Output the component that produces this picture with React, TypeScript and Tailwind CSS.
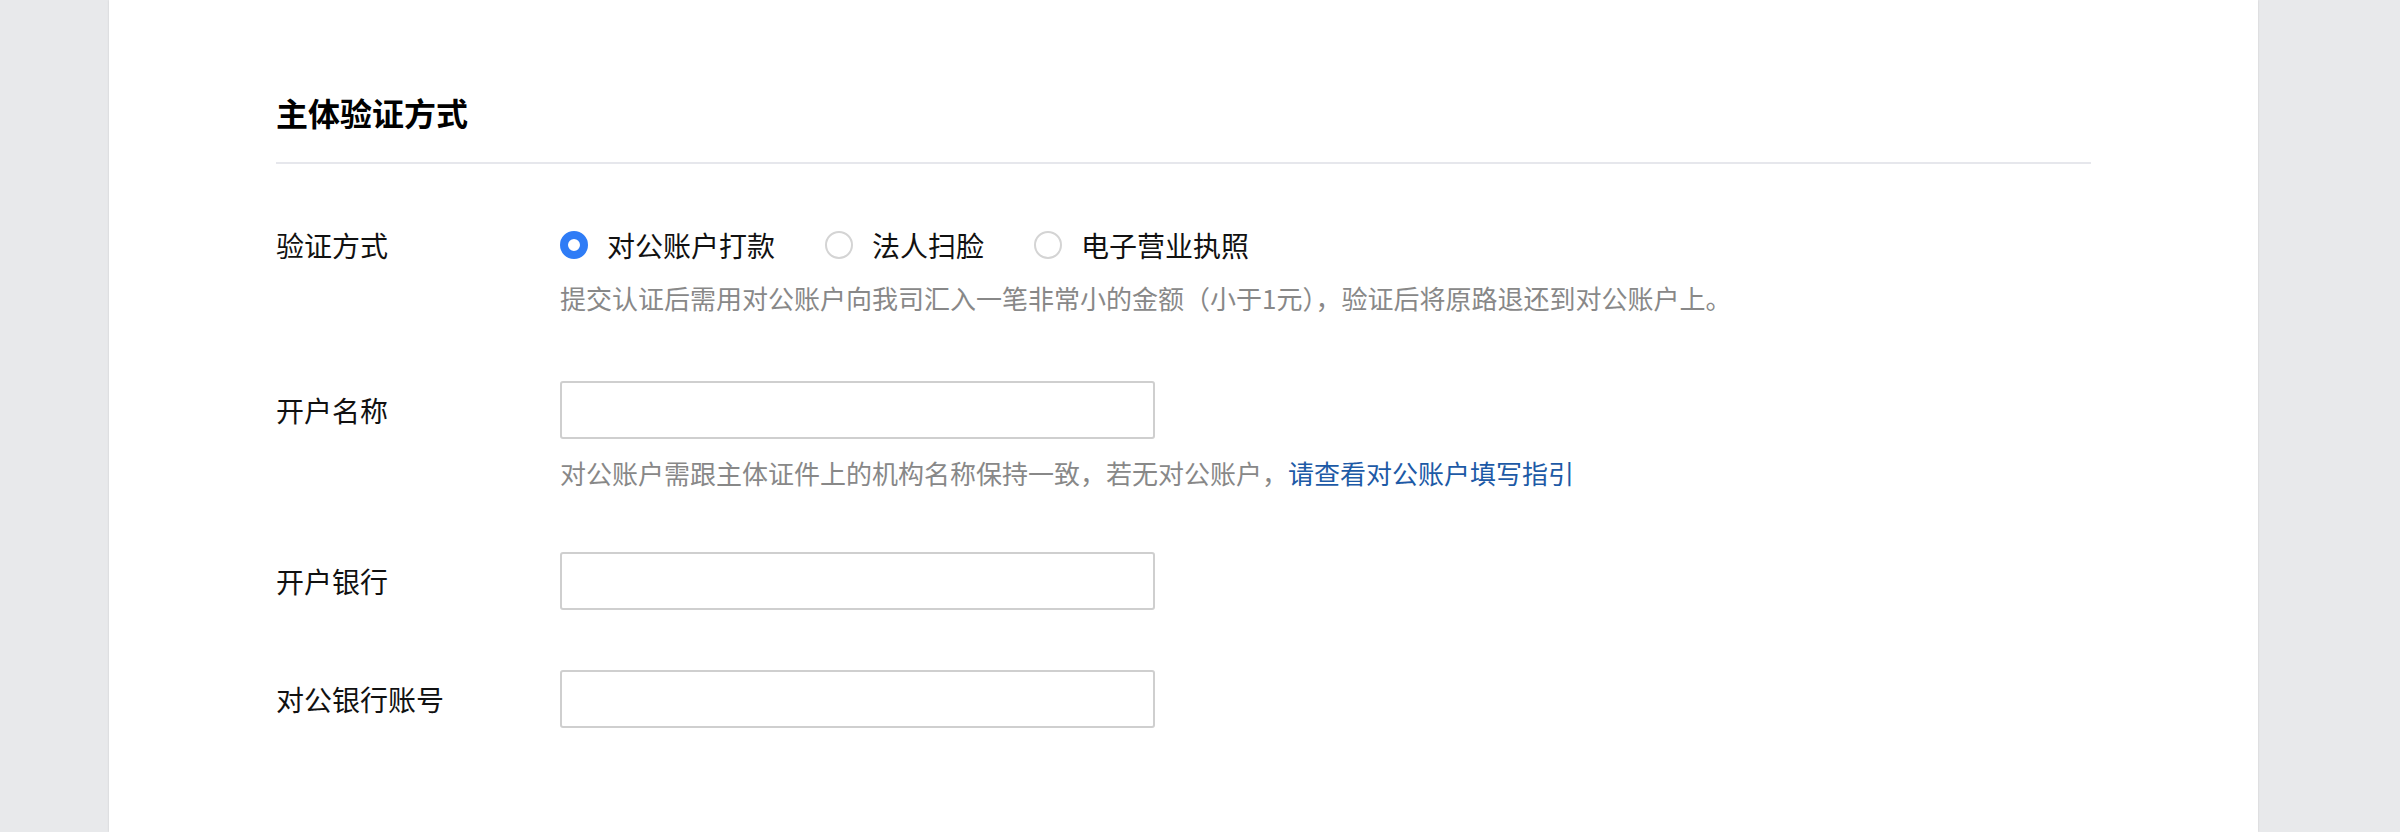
import React from "react";

const font = { fontFamily: '"Noto Sans CJK SC", "Noto Sans", sans-serif' };

type RadioOpt = { label: string; checked?: boolean };

const options: RadioOpt[] = [
  { label: "对公账户打款", checked: true },
  { label: "法人扫脸" },
  { label: "电子营业执照" },
];

function Radio({ label, checked }: RadioOpt) {
  return (
    <label className="flex items-center h-[40px] mr-[50px]">
      {checked ? (
        <span className="w-[28px] h-[28px] rounded-full border-[8px] border-[#2f7cf6] bg-white box-border" />
      ) : (
        <span className="w-[28px] h-[28px] rounded-full border-2 border-[#d4d4d4] bg-white box-border" />
      )}
      <span className="ml-[19px] text-[28px] leading-[40px] text-[#111]">{label}</span>
    </label>
  );
}

function Field({ label }: { label: string }) {
  return (
    <div className="flex h-[58px] items-center">
      <div className="w-[284px] text-[28px] leading-[40px] text-[#111]">{label}</div>
      <input className="w-[595px] h-[58px] border-2 border-[#cfcfcf] rounded-[3px] outline-none px-3 text-[26px]" />
    </div>
  );
}

export default function App() {
  return (
    <div className="min-h-[832px] w-full bg-[#e8e9eb]" style={font}>
      <div className="ml-[109px] w-[2149px] min-h-[832px] bg-white shadow-[0_0_2px_rgba(0,0,0,0.12)] px-[167px] pt-[88px] pb-10">
        <div className="pb-[26px] border-b-2 border-[#e6e7ec]">
          <h2 className="text-[32px] leading-[48px] font-bold text-black">主体验证方式</h2>
        </div>

        {/* verify method */}
        <div className="mt-[61px] flex">
          <div className="w-[284px] text-[28px] leading-[40px] text-[#111]">验证方式</div>
          <div className="flex flex-col">
            <div className="flex">
              {options.map((o, i) => (
                <Radio key={i} label={o.label} checked={o.checked} />
              ))}
            </div>
            <p className="mt-[13px] text-[26px] leading-[39px] text-[#888]">
              提交认证后需用对公账户向我司汇入一笔非常小的金额（小于1元），验证后将原路退还到对公账户上。
            </p>
          </div>
        </div>

        <div className="mt-[64px]">
          <Field label="开户名称" />
          <p className="ml-[284px] mt-[14px] text-[26px] leading-[39px] text-[#888]">
            对公账户需跟主体证件上的机构名称保持一致，若无对公账户，
            <a className="text-[#1d5aa6]">请查看对公账户填写指引</a>
          </p>
        </div>

        <div className="mt-[60px]">
          <Field label="开户银行" />
        </div>

        <div className="mt-[60px]">
          <Field label="对公银行账号" />
        </div>
      </div>
    </div>
  );
}
